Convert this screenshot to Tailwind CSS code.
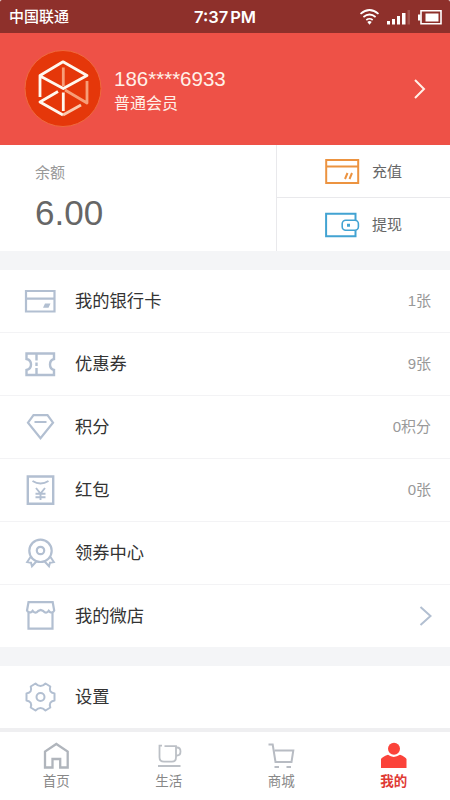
<!DOCTYPE html>
<html lang="zh-CN">
<head>
<meta charset="utf-8">
<title>我的</title>
<script src="https://cdn.jsdelivr.net/npm/@tailwindcss/browser@4"></script>
</head>
<body class="bg-white">
<div class="w-[450px] h-[800px] overflow-hidden flex flex-col bg-[#f4f5f7] rounded-t-[2px] font-['Liberation_Sans','Noto_Sans_CJK_SC',sans-serif] text-[#333]">
  <header class="h-[33px] shrink-0 bg-[#8e302b] text-white grid grid-cols-3 items-center">
    <div class="pl-[9px] text-[15px] leading-[32px] font-medium">中国联通</div>
    <div class="text-center text-[16.5px] leading-[32px] font-semibold whitespace-nowrap font-['Inter','Liberation_Sans',sans-serif]">7:37<span class="pl-[2px]">PM</span></div>
    <svg class="justify-self-end w-[100px] h-[32px]" viewBox="350 0 100 32" fill="none" stroke="#fff">
      <path d="M360.500 12.800Q369.500 5.200 378.500 12.800M363.400 16Q369.500 11 375.600 16M366.300 19Q369.500 16.500 372.700 19" stroke-width="1.700"/>
      <path d="M367.300 21Q369.500 19.200 371.700 21L369.500 23.800Z" fill="#fff" stroke="none"/>
      <path d="M387 20h3v3.500h-3zM392 18h3v5.500h-3zM397 15h3v8.500h-3zM402 12h3.500v11.500h-3.500z" fill="#fff" stroke="none"/>
      <path d="M407.500 9h2.500v14.500h-2.500z" fill="#a5554f" stroke="none"/>
      <path d="M421 9.800h20v13h-20z" stroke-width="1.600"/>
      <path d="M425.500 12.500h13v8h-13zM418 13.500h2.500v6H418z" fill="#fff" stroke="none"/>
    </svg>
  </header>

  <section class="h-[112px] shrink-0 bg-[#ee5147] text-[#fff0e8] flex items-center pl-[24px] pr-[23px]">
    <svg class="w-[78px] h-[78px] shrink-0" viewBox="24 50 78 78" fill="none" stroke-width="2.800" stroke-linejoin="round">
      <circle cx="63" cy="88.500" r="38" fill="#e5370a" stroke="#ee6a3e" stroke-width="1"/>
      <path d="M63.300 67.500V86M87 81v22L65 90" stroke="#f79d78"/>
      <path d="M40 97V75.500L63 61.800L87 75.500L63.300 88.500L41 76.500M58 91.500L40 102L63 115M63.300 92.500V111" stroke="#fff8ef"/>
      <path d="M63 115L81 105" stroke="#fbc9ae"/>
    </svg>
    <div class="ml-[12px] grow pt-[5px]">
      <div class="text-[20.500px] leading-[25px]">186****6933</div>
      <div class="text-[16px] leading-[26px]">普通会员</div>
    </div>
    <svg class="w-[14px] h-[22px]" viewBox="0 0 14 22" fill="none" stroke="#fff0e8" stroke-width="2"><path d="M2 2l9 9-9 9"/></svg>
  </section>

  <section class="h-[106px] shrink-0 bg-white flex">
    <div class="w-[277px] border-r border-[#e9e9ec] pl-[35px] pt-[16px]">
      <div class="text-[15px] leading-[24px] text-[#999]">余额</div>
      <div class="text-[35px] leading-[40px] mt-[8px] text-[#666]">6.00</div>
    </div>
    <div class="grow flex flex-col text-[15px] text-[#666]">
      <div class="h-[53px] border-b border-[#e9e9ec] flex items-center pl-[47px] gap-[11px]">
        <svg class="w-[37px] h-[28px]" viewBox="324 157 37 28" fill="none" stroke="#ec9340" stroke-width="2"><path d="M326.200 160h32v23h-32zM326 166.500h32.500M345 179l2.500-6M349.500 179l2.500-6"/></svg>
        <span class="pt-[2px]">充值</span>
      </div>
      <div class="grow flex items-center pl-[47px] gap-[11px]">
        <svg class="w-[37px] h-[28px]" viewBox="324 211 37 28" fill="none" stroke="#42a3d2" stroke-width="2"><path d="M355.500 220v-6.200h-29.400v22.400h29.400v-5.700"/><rect x="342.200" y="220.200" width="16.200" height="10" rx="3.500" stroke-width="1.600"/><path d="M347 223.800h3v3h-3z" fill="#42a3d2" stroke="none"/></svg>
        <span class="pt-[2px]">提现</span>
      </div>
    </div>
  </section>

  <main class="mt-[19px] bg-white shrink-0 text-[17.300px]">
    <div class="h-[63px] border-b border-[#f3f3f5] flex items-center pl-[20px] pr-[19px]">
      <svg class="w-[40px] h-[40px] mr-[15px]" viewBox="20 281 40 40" fill="none" stroke="#b2bfd1" stroke-width="2.200"><path d="M26 291h28.500v20.500H26zM26 298.700h28.500"/><path d="M45 303.500h5.500l-2 4.300H43z" fill="#b2bfd1" stroke="none"/></svg>
      <span class="grow pt-[2px]">我的银行卡</span><span class="text-[15px] pt-[1px] text-[#999]">1张</span>
    </div>
    <div class="h-[63px] border-b border-[#f3f3f5] flex items-center pl-[20px] pr-[19px]">
      <svg class="w-[40px] h-[40px] mr-[15px]" viewBox="20 344 40 40" fill="none" stroke="#b2bfd1" stroke-width="2.400"><path d="M26.500 353.500H54v5.500Q50 360 50 364.500T54 370v5H26.500v-5Q31 369 31 364.500T26.500 359z"/><path d="M36.500 354v6.500M36.500 362.500v3.500M36.500 368v7"/></svg>
      <span class="grow pt-[2px]">优惠券</span><span class="text-[15px] pt-[1px] text-[#999]">9张</span>
    </div>
    <div class="h-[63px] border-b border-[#f3f3f5] flex items-center pl-[20px] pr-[19px]">
      <svg class="w-[40px] h-[40px] mr-[15px]" viewBox="20 407 40 40" fill="none" stroke="#b2bfd1" stroke-width="2.200"><path d="M33.500 415.200h14l5.500 7.500L40.500 438.200L28 422.700zM34.500 422h12"/></svg>
      <span class="grow pt-[2px]">积分</span><span class="text-[15px] pt-[1px] text-[#999]">0积分</span>
    </div>
    <div class="h-[63px] border-b border-[#f3f3f5] flex items-center pl-[20px] pr-[19px]">
      <svg class="w-[40px] h-[40px] mr-[15px]" viewBox="20 470 40 40" fill="none" stroke="#b2bfd1" stroke-width="2.400"><path d="M27.800 476.500h25.400v27.200H27.800z"/><path d="M32.500 481Q40.500 486 48.500 481M36 488l4.500 5.500 4.500-5.500M40.500 493.500v6.500M35.500 493.800h10M35.500 497.300h10" stroke-width="1.900"/></svg>
      <span class="grow pt-[2px]">红包</span><span class="text-[15px] pt-[1px] text-[#999]">0张</span>
    </div>
    <div class="h-[63px] border-b border-[#f3f3f5] flex items-center pl-[20px] pr-[19px]">
      <svg class="w-[40px] h-[40px] mr-[15px]" viewBox="20 533 40 40" fill="none" stroke="#b2bfd1" stroke-width="2.200"><circle cx="40.500" cy="550.800" r="11.200"/><circle cx="40.500" cy="550.500" r="3.700"/><path d="M30.500 557l-3.300 5 3.800 .7 1 3.500 4.800-5.200M50.500 557l3.300 5-3.800 .7-1 3.500-4.800-5.200" stroke-width="2"/></svg>
      <span class="grow pt-[2px]">领券中心</span>
    </div>
    <div class="h-[62px] flex items-center pl-[20px] pr-[17px]">
      <svg class="w-[40px] h-[40px] mr-[15px]" viewBox="20 596 40 40" fill="none" stroke="#b2bfd1" stroke-width="2.200"><path d="M28.500 602.200h24.200l1.500 8.300q-1.500 3-4.300 1.500l-1.200-1.200q-2.500 3.400-5.500.2l-2.500-1-2.500 1q-3 3.200-5.500-.2l-1.200 1.200q-3 1.500-4.500-1.500zM28.500 612v16.700h24V612"/></svg>
      <span class="grow pt-[2px]">我的微店</span>
      <svg class="w-[14px] h-[22px]" viewBox="0 0 14 22" fill="none" stroke="#b2bfd1" stroke-width="2"><path d="M1.500 2l10 9-10 9"/></svg>
    </div>
  </main>

  <section class="mt-[19px] h-[62px] shrink-0 bg-white text-[17.300px] flex items-center pl-[20px]">
    <svg class="w-[40px] h-[40px] mr-[15px]" viewBox="20 677 40 40" fill="none" stroke="#b2bfd1" stroke-width="2" stroke-linejoin="round"><circle cx="40.500" cy="697" r="4"/><path d="M35.500 683.500Q40.500 688.500 45.500 683.500L50.300 686.500Q48.300 692.500 54.500 693.500V700.500Q48.300 701.500 50.300 707.500L45.500 710.500Q40.500 705.500 35.500 710.500L30.700 707.500Q32.700 701.500 26.500 700.500V693.500Q32.700 692.500 30.700 686.500Z"/></svg>
    <span class="pt-[2px]">设置</span>
  </section>

  <nav class="mt-auto h-[72px] border-t-4 border-[#efeff1] shrink-0 bg-white grid grid-cols-4 text-[13.500px] leading-[20px] text-[#888]">
    <div class="flex flex-col items-center pt-[7px] gap-px">
      <svg class="w-[32px] h-[32px]" viewBox="40 739 32 32" fill="none" stroke="#b0b5bc" stroke-width="2.300"><path d="M45 767.500v-16l11.300-7.500 11.400 7.500v16h-7.500V759h-7.700v8.500z"/></svg>
      <span>首页</span>
    </div>
    <div class="flex flex-col items-center pt-[7px] gap-px">
      <svg class="w-[32px] h-[32px]" viewBox="153 739 32 32" fill="none" stroke="#bcc0c6" stroke-width="1.800"><path d="M164.500 746.200H176v11q0 4.500-4 4.500h-8q-4.500 0-4.500-4.500v-11.500h2.500M176 747.500h1q3.500 0 3.500 4t-3.500 4h-1M158 766h22.500"/></svg>
      <span>生活</span>
    </div>
    <div class="flex flex-col items-center pt-[7px] gap-px">
      <svg class="w-[32px] h-[32px]" viewBox="265 739 32 32" fill="none" stroke="#b8bcc3" stroke-width="2"><path d="M268.500 744.500h4.200l2.800 17.500h16l1.800-11.500h-18.500M274.500 767h4.500M286.500 767h4.500"/></svg>
      <span>商城</span>
    </div>
    <div class="flex flex-col items-center pt-[7px] gap-px text-[#df3b35] font-bold">
      <svg class="w-[32px] h-[32px]" viewBox="378 739 32 32" fill="#fb433a"><circle cx="394" cy="748.800" r="6"/><path d="M381 768v-9q1-2 7-4.200 5.500 4.200 12 0 5.500 2.200 6.500 4.200v9z"/></svg>
      <span>我的</span>
    </div>
  </nav>
</div>
</body>
</html>
